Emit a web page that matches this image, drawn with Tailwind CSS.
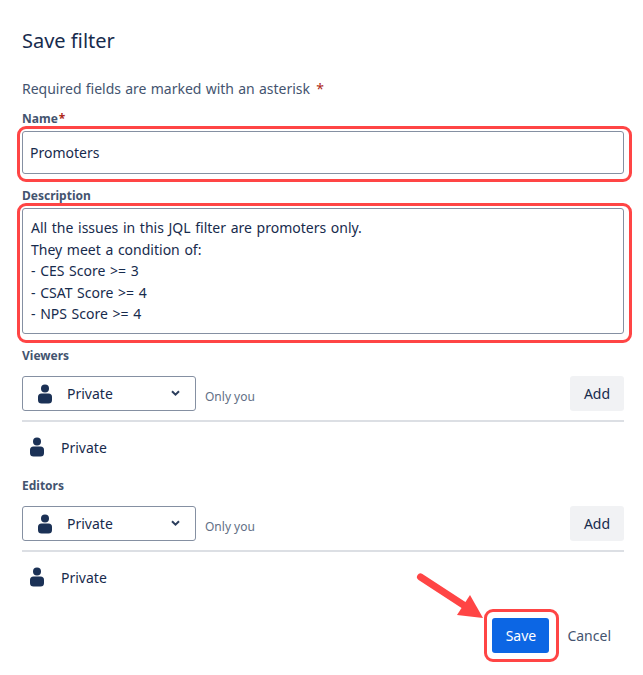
<!DOCTYPE html>
<html lang="en">
<head>
  <meta charset="UTF-8">
  <title>Save filter</title>
  <script src="https://cdn.jsdelivr.net/npm/@tailwindcss/browser@4"></script>
</head>
<body class="bg-white w-[643px] h-[675px] overflow-hidden font-['Noto_Sans','Open_Sans',sans-serif] text-[#172b4d]">
  <div class="relative h-full pl-[22px] pr-[19px] pt-[27px]">
    <h1 class="text-[20px] leading-[27px] h-[27px]">Save filter</h1>

    <p class="mt-[25px] text-[14px] leading-[20px] text-[#44546f] [word-spacing:0.6px]">Required fields are marked with an asterisk <span class="text-[#ae2a19] ml-[2px]">*</span></p>

    <!-- Name -->
    <label class="block mt-[12px] text-[12px] leading-[16px] font-bold text-[#44546f]">Name<span class="text-[#ae2a19] ml-[1px]">*</span></label>
    <div class="relative mt-[4px]">
      <div class="h-[43px] rounded-[3px] border border-[#8590a2] flex items-center px-[7px] text-[14px]">Promoters</div>
      <div class="absolute -left-[5px] -right-[8px] -top-[5px] -bottom-[8px] border-[3px] border-[#ff4545] rounded-[9px]"></div>
    </div>

    <!-- Description -->
    <label class="block mt-[14px] text-[12px] leading-[16px] font-bold text-[#44546f]">Description</label>
    <div class="relative mt-[4px]">
      <div class="h-[126px] rounded-[3px] border border-[#8590a2] px-[8px] pt-[8px] text-[14px] leading-[21.6px] [word-spacing:1px]">
        <div>All the issues in this JQL filter are promoters only.</div>
        <div>They meet a condition of:</div>
        <div>- CES Score &gt;= 3</div>
        <div>- CSAT Score &gt;= 4</div>
        <div>- NPS Score &gt;= 4</div>
      </div>
      <div class="absolute -left-[5px] -right-[8px] -top-[5px] -bottom-[9px] border-[3px] border-[#ff4545] rounded-[9px]"></div>
    </div>

    <!-- Viewers -->
    <label class="block mt-[14px] text-[12px] leading-[16px] font-bold text-[#44546f]">Viewers</label>
    <div class="flex items-start mt-[12px]">
      <div class="w-[174px] h-[35px] rounded-[3px] border border-[#8590a2] flex items-center pl-[15px] pr-[15px] text-[14px]">
        <svg width="14" height="20" viewBox="0 0 14 20" class="shrink-0 text-[#1b3156]" fill="currentColor"><circle cx="7" cy="4.5" r="4"/><rect x="0" y="9.5" width="14" height="10" rx="3.5"/></svg>
        <span class="ml-[15px]">Private</span>
        <svg width="9" height="7" viewBox="0 0 9 7" class="ml-auto" fill="none" stroke="#2c3e5d" stroke-width="2"><path d="M1 1.2 4.5 4.7 8 1.2"/></svg>
      </div>
      <span class="ml-[9px] mt-[11px] text-[12px] leading-[20px] text-[#626f86]">Only you</span>
      <button class="ml-auto w-[54px] h-[35px] rounded-[3px] bg-[#f1f2f4] text-[14px] text-[#172b4d]">Add</button>
    </div>
    <div class="mt-[9px] h-[2px] bg-[#dcdfe4]"></div>
    <div class="flex items-center h-[50px] pl-[8px] text-[14px] text-[#172b4d]">
      <svg width="14" height="20" viewBox="0 0 14 20" class="shrink-0 text-[#1b3156]" fill="currentColor"><circle cx="7" cy="4.5" r="4"/><rect x="0" y="9.5" width="14" height="10" rx="3.5"/></svg>
      <span class="ml-[17px]">Private</span>
    </div>

    <!-- Editors -->
    <label class="block mt-[6px] text-[12px] leading-[16px] font-bold text-[#44546f]">Editors</label>
    <div class="flex items-start mt-[12px]">
      <div class="w-[174px] h-[35px] rounded-[3px] border border-[#8590a2] flex items-center pl-[15px] pr-[15px] text-[14px]">
        <svg width="14" height="20" viewBox="0 0 14 20" class="shrink-0 text-[#1b3156]" fill="currentColor"><circle cx="7" cy="4.5" r="4"/><rect x="0" y="9.5" width="14" height="10" rx="3.5"/></svg>
        <span class="ml-[15px]">Private</span>
        <svg width="9" height="7" viewBox="0 0 9 7" class="ml-auto" fill="none" stroke="#2c3e5d" stroke-width="2"><path d="M1 1.2 4.5 4.7 8 1.2"/></svg>
      </div>
      <span class="ml-[9px] mt-[11px] text-[12px] leading-[20px] text-[#626f86]">Only you</span>
      <button class="ml-auto w-[54px] h-[35px] rounded-[3px] bg-[#f1f2f4] text-[14px] text-[#172b4d]">Add</button>
    </div>
    <div class="mt-[9px] h-[2px] bg-[#dcdfe4]"></div>
    <div class="flex items-center h-[50px] pl-[8px] text-[14px] text-[#172b4d]">
      <svg width="14" height="20" viewBox="0 0 14 20" class="shrink-0 text-[#1b3156]" fill="currentColor"><circle cx="7" cy="4.5" r="4"/><rect x="0" y="9.5" width="14" height="10" rx="3.5"/></svg>
      <span class="ml-[17px]">Private</span>
    </div>

    <!-- Footer -->
    <div class="flex items-center justify-end mt-[16px] pr-[13px] text-[14px]">
      <div class="relative">
        <button class="block w-[57px] h-[35px] rounded-[3px] bg-[#0c66e4] text-white">Save</button>
        <div class="absolute -left-[8px] -right-[10px] -top-[9px] -bottom-[9px] border-[3px] border-[#ff4545] rounded-[9px]"></div>
      </div>
      <button class="ml-[18px] text-[#44546f]">Cancel</button>
    </div>

    <!-- annotation arrow -->
    <svg class="absolute left-[410px] top-[565px]" width="80" height="60" viewBox="0 0 80 60" fill="#ff4545">
      <path d="M10.5 12 L55 41" stroke="#ff4545" stroke-width="7" stroke-linecap="round" fill="none"/>
      <path d="M73 53 L47 50 L60 30 Z"/>
    </svg>
  </div>
</body>
</html>
